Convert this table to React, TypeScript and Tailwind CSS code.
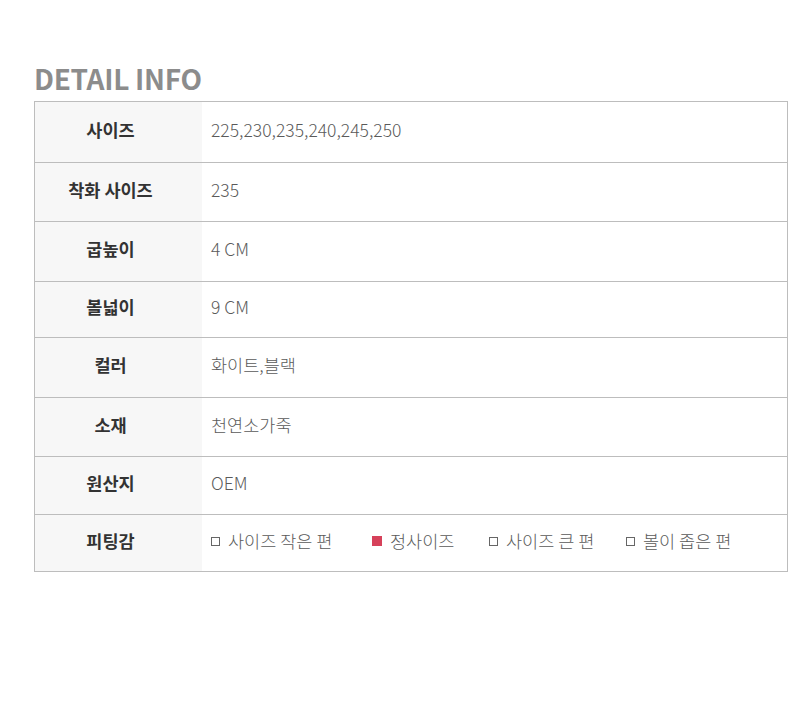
const rows: { label: string; value: string; h: string }[] = [
  { label: "사이즈", value: "225,230,235,240,245,250", h: "h-[60px]" },
  { label: "착화 사이즈", value: "235", h: "h-[59px]" },
  { label: "굽높이", value: "4 CM", h: "h-[60px]" },
  { label: "볼넓이", value: "9 CM", h: "h-[56px]" },
  { label: "컬러", value: "화이트,블랙", h: "h-[60px]" },
  { label: "소재", value: "천연소가죽", h: "h-[59px]" },
  { label: "원산지", value: "OEM", h: "h-[58px]" },
];

const fits = [
  { text: "사이즈 작은 편", on: false, w: "w-[161px]" },
  { text: "정사이즈", on: true, w: "w-[117px]" },
  { text: "사이즈 큰 편", on: false, w: "w-[137px]" },
  { text: "볼이 좁은 편", on: false, w: "" },
];

const Box = ({ on }: { on: boolean }) =>
  on ? (
    <span className="inline-block w-[10px] h-[10px] bg-[#d6415a] mr-[8px]" />
  ) : (
    <span className="inline-block w-[9px] h-[9px] border border-[#666] mr-[8px]" />
  );

export default function App() {
  return (
    <div
      className="w-[812px] h-[703px] bg-white pt-[60px] pl-[34px]"
      style={{ fontFamily: '"Noto Sans CJK KR", "Noto Sans", sans-serif' }}
    >
      <h1 className="text-[28px] leading-[36px] font-bold text-[#8c8c8c] tracking-[-0.3px] mb-[5px]">
        DETAIL INFO
      </h1>
      <div className="w-[754px] border border-[#bdbdbd]">
        {rows.map((r, i) => (
          <div
            key={r.label}
            className={`flex ${r.h} ${i > 0 ? "border-t border-[#bdbdbd]" : ""}`}
          >
            <div className="w-[167px] shrink-0 bg-[#f7f7f7] flex items-center justify-center pr-[16px] pb-[4px] text-[17.5px] font-bold text-[#333]">
              {r.label}
            </div>
            <div className="flex-1 flex items-center pl-[9px] pb-[4px] text-[17.5px] font-light text-[#5a5a5a]">
              {r.value}
            </div>
          </div>
        ))}
        <div className="flex h-[57px] border-t border-[#bdbdbd]">
          <div className="w-[167px] shrink-0 bg-[#f7f7f7] flex items-center justify-center pr-[16px] pb-[4px] text-[17.5px] font-bold text-[#333]">
            피팅감
          </div>
          <div className="flex-1 flex items-center pl-[9px] pb-[4px] text-[17.5px] font-light text-[#5a5a5a]">
            {fits.map((f) => (
              <span key={f.text} className={`flex items-center ${f.w}`}>
                <Box on={f.on} />
                {f.text}
              </span>
            ))}
          </div>
        </div>
      </div>
    </div>
  );
}
